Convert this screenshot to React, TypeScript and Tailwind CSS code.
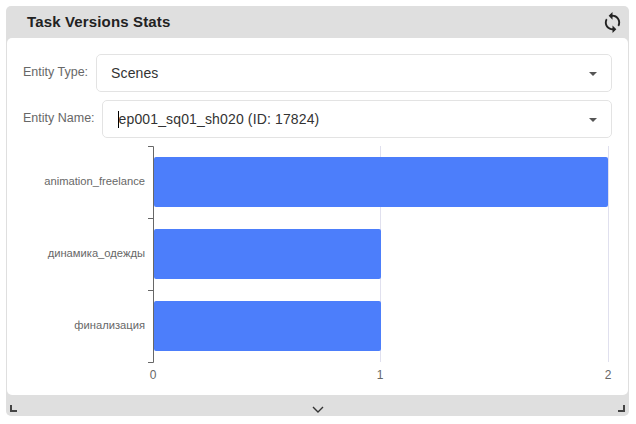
import { MdSync } from "react-icons/md";

const bars = [
    { label: "animation_freelance", y: 157, width: 454 },
    { label: "динамика_одежды", y: 229, width: 227 },
    { label: "финализация", y: 301, width: 227 },
];

function Caret() {
    return <div className="ml-auto h-0 w-0 border-x-[4px] border-t-[4px] border-x-transparent border-t-[#555]" />;
}

function Chart() {
    const font = { fontFamily: "'Liberation Sans', Arial, sans-serif" };

    return (
        <svg width="621" height="250" viewBox="7 140 621 250" className="block opacity-[0.99]">
            {/* grid */}
            <line x1="380.5" y1="146" x2="380.5" y2="362" stroke="#e0e0ee" />
            <line x1="608.5" y1="146" x2="608.5" y2="362" stroke="#e0e0ee" />

            {bars.map((bar) => (
                <g key={bar.label}>
                    <path
                        d={`M154 ${bar.y + 2} a2 2 0 0 1 2 -2 H${152 + bar.width} a2 2 0 0 1 2 2 V${bar.y + 48} a2 2 0 0 1 -2 2 H156 a2 2 0 0 1 -2 -2 Z`}
                        fill="#4a7dfb"
                    />
                    <text x="145" y={bar.y + 28} textAnchor="end" fontSize="11.2" fill="#666" style={font}>
                        {bar.label}
                    </text>
                </g>
            ))}

            {/* y axis */}
            <path d="M148 146.5 H153.5 V362.5 H148 M148 218.5 H153.5 M148 290.5 H153.5" fill="none" stroke="#666" />

            <text x="153" y="379" textAnchor="middle" fontSize="12" fill="#666" style={font}>0</text>
            <text x="380" y="379" textAnchor="middle" fontSize="12" fill="#666" style={font}>1</text>
            <text x="608" y="379" textAnchor="middle" fontSize="12" fill="#666" style={font}>2</text>
        </svg>
    );
}

export default function App() {
    return (
        <div className="h-[424px] w-[636px] overflow-hidden bg-white p-[6px] font-['Liberation_Sans',Arial,sans-serif]">
            <div className="flex h-[410px] w-[623px] flex-col rounded-[5px] bg-[#dfdfdf]">

                {/* Header */}
                <div className="flex h-[32px] shrink-0 items-center justify-between pl-[21px] pr-[5px]">
                    <span className="text-[15px] font-bold tracking-[0.15px] text-[#222]">Task Versions Stats</span>
                    <MdSync size={23} className="text-[#222]" />
                </div>

                {/* Body */}
                <div className="mx-px flex h-[357px] flex-col overflow-hidden rounded-[5px] bg-white pt-[16px]">
                    <div className="flex items-center gap-[8px] px-[16px]">
                        <label className="pb-[2px] text-[12.5px] leading-[34px] text-[#666] opacity-[0.99]">Entity Type:</label>
                        <div className="flex h-[38px] flex-1 items-center rounded-[5px] border border-[#e3e3e3] pl-[14px] pr-[14px] pt-px text-[14px] tracking-[0.1px] text-[#333]">
                            Scenes
                            <Caret />
                        </div>
                    </div>
                    <div className="mt-[8px] flex items-center gap-[7px] px-[16px]">
                        <label className="pb-[2px] text-[12.5px] leading-[34px] text-[#666] opacity-[0.99]">Entity Name:</label>
                        <div className="relative flex h-[38px] flex-1 items-center rounded-[5px] border border-[#e3e3e3] pl-[15px] pr-[14px] pt-px text-[14px] tracking-[0.14px] text-[#333]">
                            <span className="pl-px">ep001_sq01_sh020 (ID: 17824)</span>
                            <span className="absolute left-[15px] top-[10px] h-[17px] w-px bg-black" />
                            <Caret />
                        </div>
                    </div>
                    <div className="mt-[2px]">
                        <Chart />
                    </div>
                </div>

                {/* Footer */}
                <div className="relative flex-1">
                    <div className="absolute bottom-[4px] left-[4px] h-[7px] w-[7px] border-b-2 border-l-2 border-[#444]" />
                    <svg width="12" height="8" viewBox="0 0 12 8" className="absolute bottom-[2px] left-[306px]">
                        <path d="M1 1 L6 6 L11 1" fill="none" stroke="#333" strokeWidth="1.4" />
                    </svg>
                    <div className="absolute bottom-[4px] right-[4px] h-[7px] w-[7px] border-b-2 border-r-2 border-[#444]" />
                </div>

            </div>
        </div>
    );
}
